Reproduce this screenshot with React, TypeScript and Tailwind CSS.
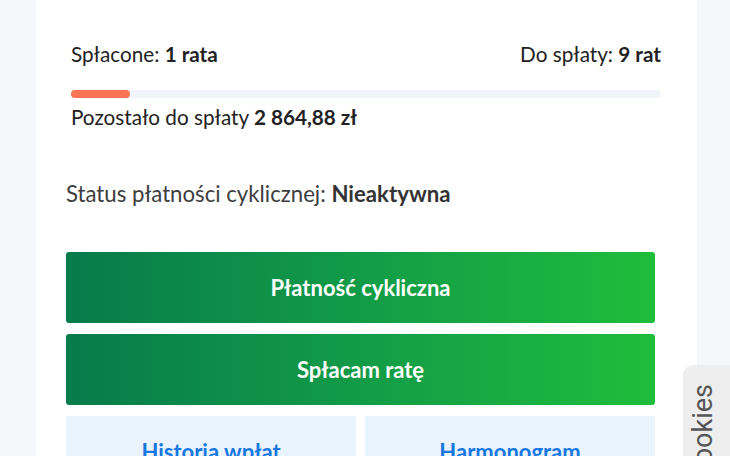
import React from "react";

export default function App() {
  return (
    <div className="relative h-[456px] w-[730px] overflow-hidden bg-[#f5f7fb]" style={{ fontFamily: "Lato, 'Noto Sans', sans-serif" }}>
      <div className="ml-[36px] h-full w-[661px] bg-white">
        <div className="pl-[35px] pr-[36px] pt-[40px]">
          <div className="flex justify-between text-[20.7px] leading-[28px] text-[#222]">
            <span>
              Spłacone: <b className="font-bold">1 rata</b>
            </span>
            <span>
              Do spłaty: <b className="font-bold">9 rat</b>
            </span>
          </div>
          <div className="mt-[22px] h-[8px] w-full rounded-full bg-[#f1f4f8]">
            <div className="h-full w-[59px] rounded-full bg-[#f87453]" />
          </div>
          <div className="mt-[5px] text-[20.7px] leading-[28px] text-[#222]">
            Pozostało do spłaty <b className="font-bold">2 864,88 zł</b>
          </div>
        </div>
        <div className="pl-[30px] pr-[42px]">
          <div className="mt-[48px] text-[22.2px] leading-[30px] text-[#3d3d3d]">
            Status płatności cyklicznej: <b className="font-bold text-[#333]">Nieaktywna</b>
          </div>
          <div className="mt-[43px] flex flex-col gap-[11px]">
            <button className="flex h-[71px] w-full items-center justify-center rounded-[3px] bg-gradient-to-r from-[#077b4b] to-[#1fbd3b] text-[22px] font-bold text-white">
              Płatność cykliczna
            </button>
            <button className="flex h-[71px] w-full items-center justify-center rounded-[3px] bg-gradient-to-r from-[#077b4b] to-[#1fbd3b] text-[22px] font-bold text-white">
              Spłacam ratę
            </button>
          </div>
          <div className="mt-[11px] grid grid-cols-2 gap-[9px]">
            <div className="flex h-[71px] items-center justify-center bg-[#eaf4fe] text-[22px] font-bold text-[#1877e0]">
              Historia wpłat
            </div>
            <div className="flex h-[71px] items-center justify-center bg-[#eaf4fe] text-[22px] font-bold text-[#1877e0]">
              Harmonogram
            </div>
          </div>
        </div>
      </div>
      <div className="absolute left-[683px] top-[365px] h-[130px] w-[60px] rounded-tl-[10px] bg-[#eeeeee] pl-[7px] pt-[19px]">
        <span
          className="inline-block text-[27px] leading-[27px] text-[#555]"
          style={{ writingMode: "vertical-rl", transform: "rotate(180deg)", fontFamily: "Roboto, sans-serif" }}
        >
          Cookies
        </span>
      </div>
    </div>
  );
}
